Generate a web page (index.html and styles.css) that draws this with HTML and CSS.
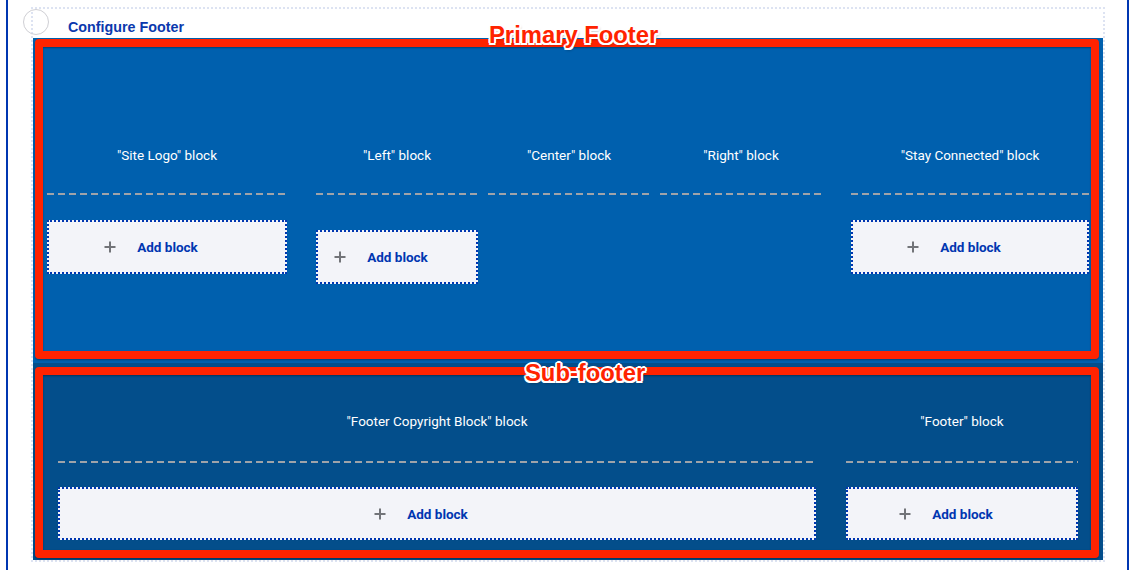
FILE: index.html
```html
<!DOCTYPE html>
<html lang="en">
<head>
<meta charset="utf-8">
<title>Configure Footer</title>
<link rel="stylesheet" href="styles.css">
</head>
<body>
<div class="frame">
  <section class="section">
    <span class="handle"></span>
    <header class="section-head"><a class="configure" href="#">Configure Footer</a></header>

    <div class="region region-primary">
      <div class="primary-grid">
        <div class="col">
          <div class="label">"Site Logo" block</div>
          <div class="sep"></div>
          <a class="add" href="#"><svg class="plus" viewBox="0 0 12 12" width="12" height="12"><path d="M6 0.5v11M0.5 6h11"/></svg><span class="add-text">Add block</span></a>
        </div>
        <div class="middle">
          <div class="col">
            <div class="label">"Left" block</div>
            <div class="sep"></div>
            <a class="add add-low" href="#"><svg class="plus" viewBox="0 0 12 12" width="12" height="12"><path d="M6 0.5v11M0.5 6h11"/></svg><span class="add-text">Add block</span></a>
          </div>
          <div class="col">
            <div class="label">"Center" block</div>
            <div class="sep"></div>
          </div>
          <div class="col">
            <div class="label">"Right" block</div>
            <div class="sep"></div>
          </div>
        </div>
        <div class="col">
          <div class="label">"Stay Connected" block</div>
          <div class="sep"></div>
          <a class="add" href="#"><svg class="plus" viewBox="0 0 12 12" width="12" height="12"><path d="M6 0.5v11M0.5 6h11"/></svg><span class="add-text">Add block</span></a>
        </div>
      </div>
    </div>

    <div class="region region-sub">
      <div class="sub-grid">
        <div class="col">
          <div class="label">"Footer Copyright Block" block</div>
          <div class="sep sep-sub"></div>
          <a class="add add-sub" href="#"><svg class="plus" viewBox="0 0 12 12" width="12" height="12"><path d="M6 0.5v11M0.5 6h11"/></svg><span class="add-text">Add block</span></a>
        </div>
        <div class="col">
          <div class="label">"Footer" block</div>
          <div class="sep sep-sub"></div>
          <a class="add add-sub" href="#"><svg class="plus" viewBox="0 0 12 12" width="12" height="12"><path d="M6 0.5v11M0.5 6h11"/></svg><span class="add-text">Add block</span></a>
        </div>
      </div>
    </div>

    <div class="annot-box annot-primary"></div>
    <div class="annot-box annot-sub"></div>
    <div class="annot-label annot-label-primary">Primary Footer</div>
    <div class="annot-label annot-label-sub">Sub-footer</div>
  </section>
</div>
</body>
</html>
```
FILE: styles.css
```css
* { box-sizing: border-box; }

html, body {
  margin: 0;
  padding: 0;
  background: #ffffff;
  height: 570px;
  overflow: hidden;
}

body {
  font-family: Roboto, "Liberation Sans", Arial, sans-serif;
}

.frame {
  margin-left: 6px;
  width: 1123px;
  height: 570px;
  border-left: 2px solid #0036b1;
  border-right: 2px solid #0036b1;
  padding: 7px 0 0 23px;
}

.section {
  position: relative;
  width: 1074px;
  border: 2px dotted #dde3f2;
}

.handle {
  position: absolute;
  left: -10px;
  top: 0;
  width: 26px;
  height: 26px;
  border: 1px solid #cfcfd4;
  border-radius: 50%;
}

.section-head {
  height: 29px;
  padding: 10px 0 0 35px;
}

.configure {
  display: block;
  font-family: "Liberation Sans", Arial, sans-serif;
  font-weight: 700;
  font-size: 14.3px;
  line-height: 16px;
  color: #0b38ad;
  text-decoration: none;
}

.region {
  color: #ffffff;
}

.region-primary {
  background: #0060ae;
  padding: 107px 14px 79px;
}

.region-sub {
  background: #034e8b;
  padding: 48px 25px 20px;
}

.primary-grid {
  display: grid;
  grid-template-columns: 240px 1fr 238px;
  column-gap: 29px;
  align-items: start;
}

.middle {
  display: grid;
  grid-template-columns: 1fr 1fr 1fr;
  column-gap: 10px;
  align-items: start;
}

.sub-grid {
  display: grid;
  grid-template-columns: 758px 232px;
  column-gap: 30px;
  align-items: start;
}

.col {
  display: flex;
  flex-direction: column;
}

.label {
  font-size: 13.5px;
  line-height: 20px;
  text-align: center;
  margin-bottom: 28px;
  white-space: nowrap;
}

.sep {
  height: 2px;
  background: repeating-linear-gradient(to right, #9fa3a9 0 7px, transparent 7px 11px);
}

.region-sub .label {
  margin-bottom: 30px;
}

.add {
  display: flex;
  align-items: center;
  justify-content: center;
  height: 54px;
  margin-top: 25px;
  background: #f3f4f9;
  border: 2px dotted #0036b1;
  text-decoration: none;
}

.add-low {
  margin-top: 35px;
}

.add-sub {
  height: 53px;
  margin-top: 24px;
}

.plus {
  display: block;
  margin-right: 21px;
  fill: none;
  stroke: #727479;
  stroke-width: 2;
}

.add-text {
  padding-right: 32px;
  font-size: 13.5px;
  font-weight: 700;
  line-height: 16px;
  color: #0036b1;
}

.annot-box {
  position: absolute;
  left: 2px;
  width: 1064px;
  border: 8px solid #ff2300;
  border-radius: 4px;
  box-shadow: 0 1px 2px rgba(0, 0, 0, 0.35), inset 0 1px 2px rgba(0, 0, 0, 0.35);
  pointer-events: none;
}

.annot-primary {
  top: 30px;
  height: 320px;
}

.annot-sub {
  top: 358px;
  height: 191px;
}

.annot-label {
  position: absolute;
  font-family: "Liberation Sans", Arial, sans-serif;
  font-weight: 700;
  font-size: 23.8px;
  line-height: 26px;
  color: #ff2300;
  white-space: nowrap;
  text-shadow:
    2px 0 0 #fff, -2px 0 0 #fff, 0 2px 0 #fff, 0 -2px 0 #fff,
    1.5px 1.5px 0 #fff, -1.5px -1.5px 0 #fff, 1.5px -1.5px 0 #fff, -1.5px 1.5px 0 #fff,
    1px 2px 3px rgba(0, 0, 0, 0.45);
}

.annot-label-primary {
  left: 456px;
  top: 13px;
}

.annot-label-sub {
  left: 492px;
  top: 351px;
}
```
